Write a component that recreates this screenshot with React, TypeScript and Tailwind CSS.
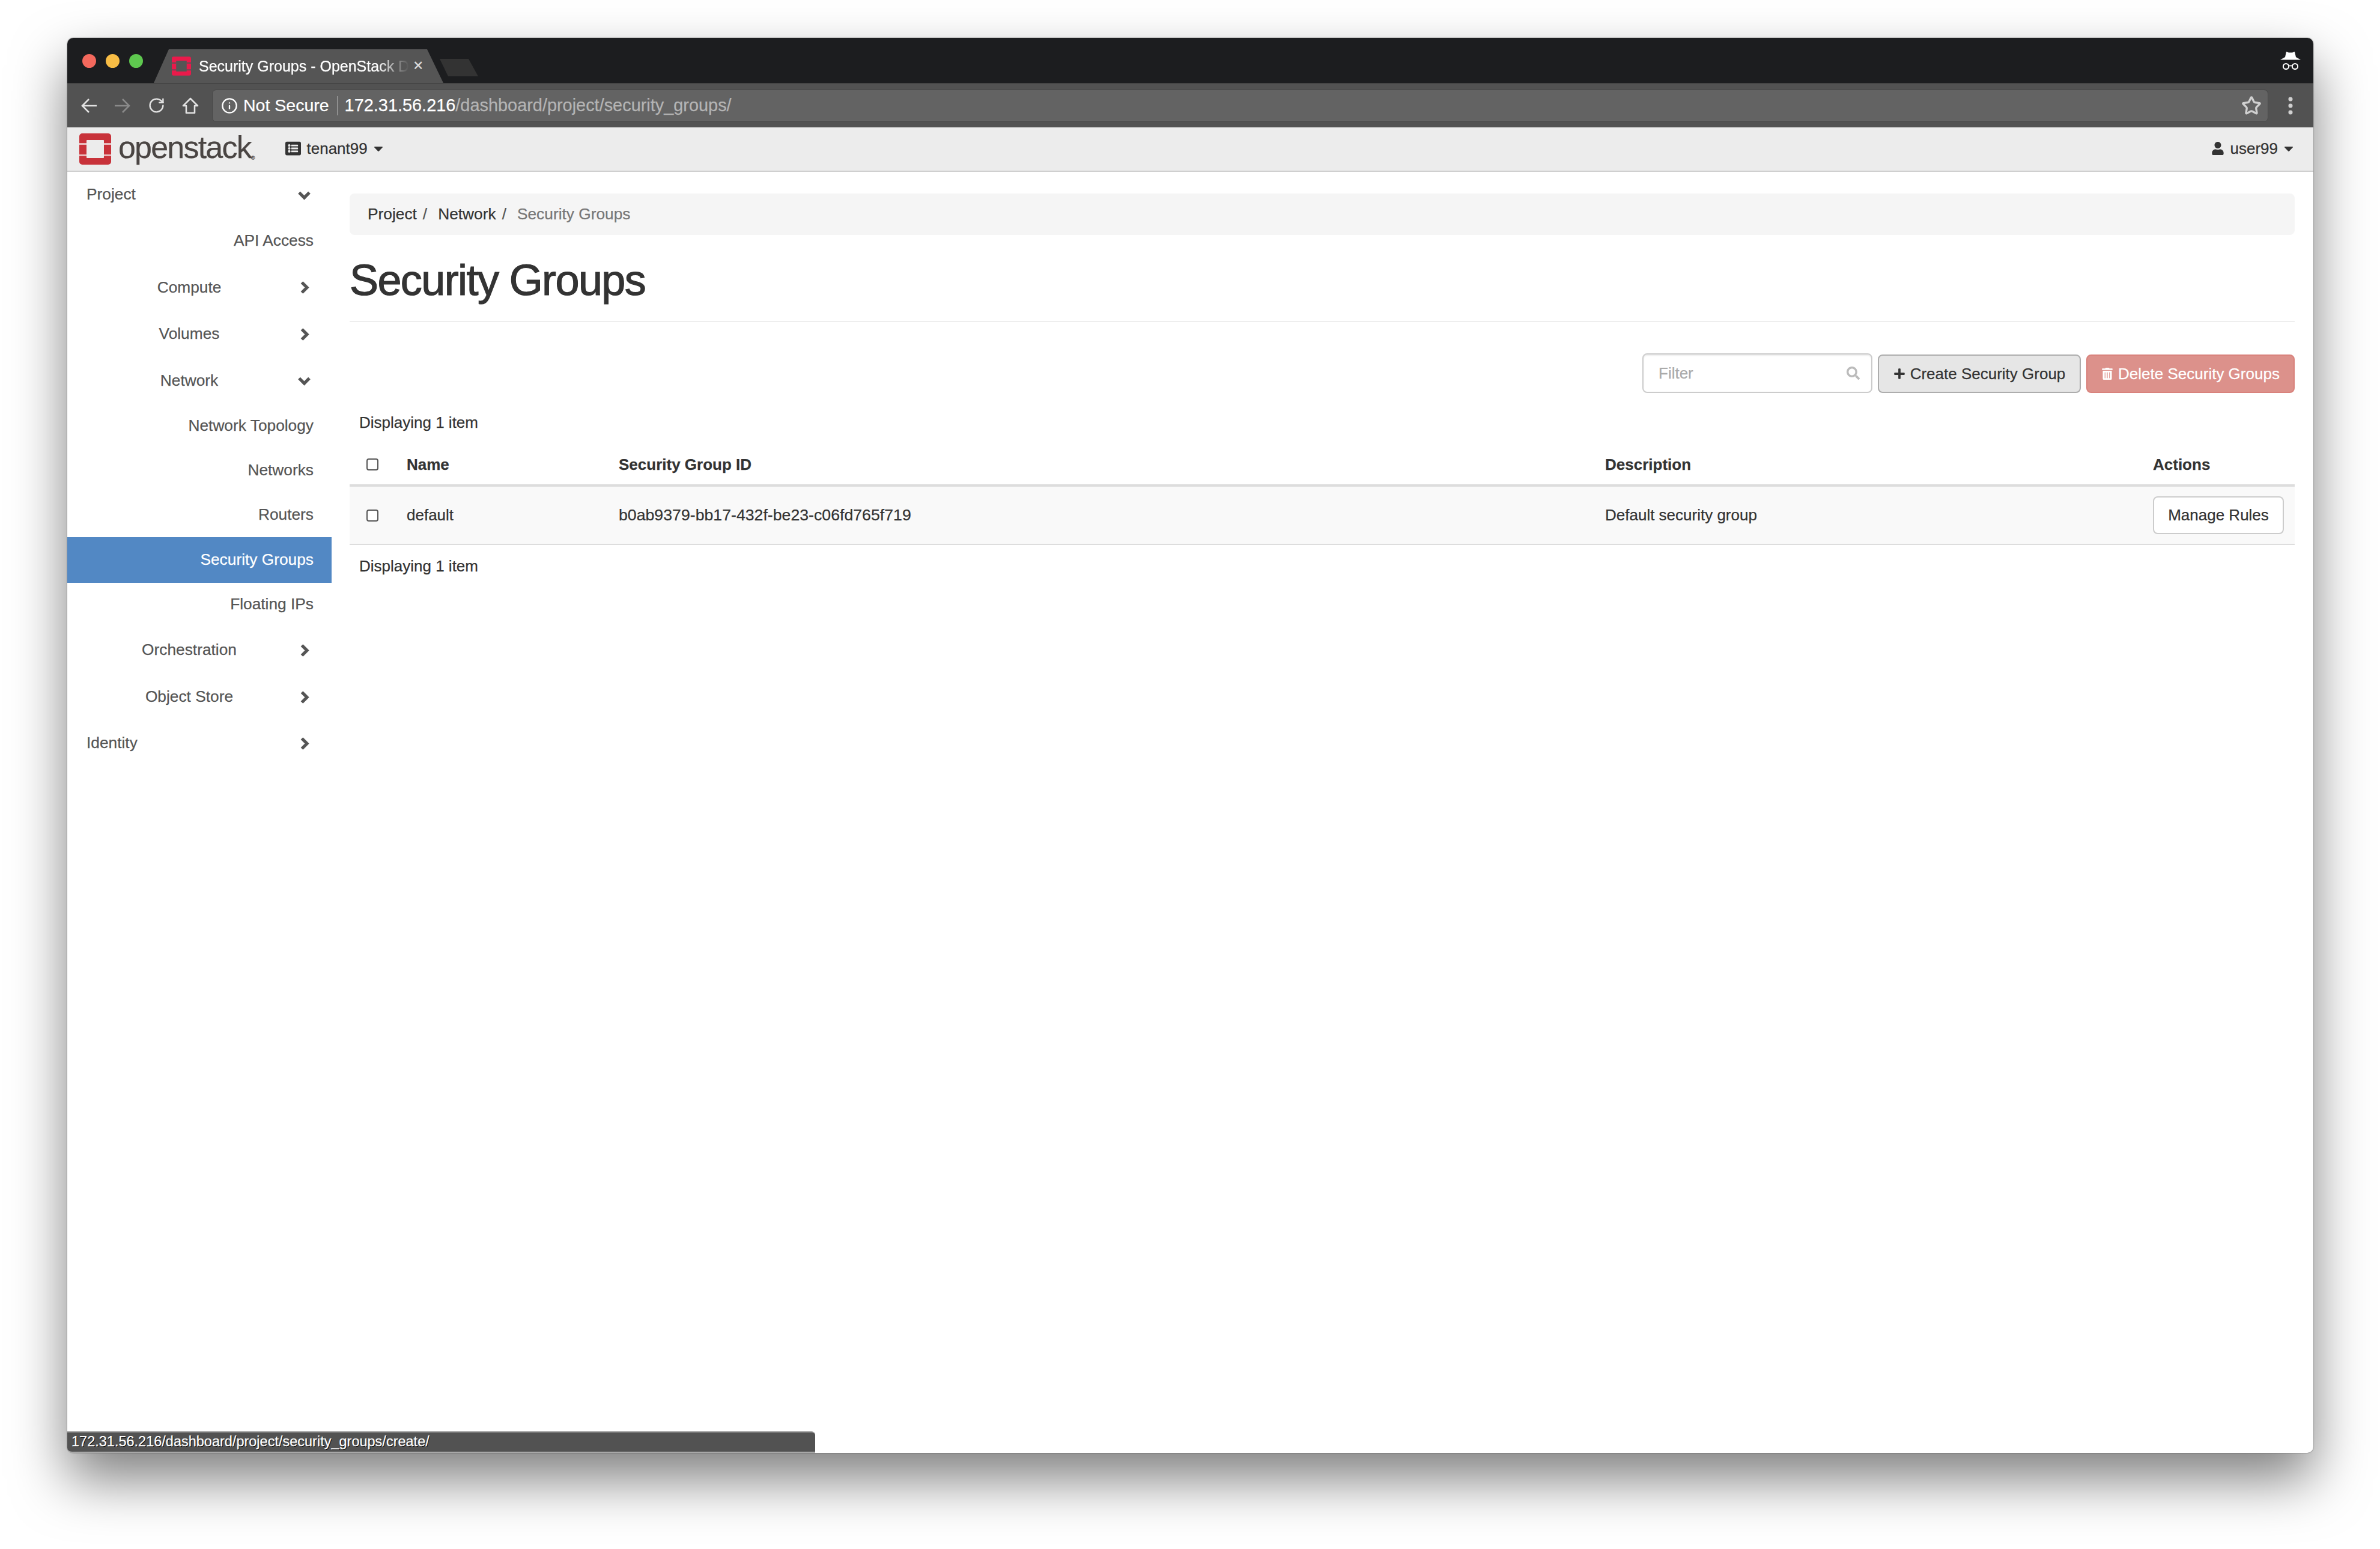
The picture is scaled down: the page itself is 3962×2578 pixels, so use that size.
import { FaCaretDown, FaListAlt, FaPlus, FaSearch, FaTrashAlt, FaUser } from 'react-icons/fa';
import { Info, RotateCw, Star } from 'lucide-react';

type NavItem = {
  label: string;
  height: string;
  kind: 'top' | 'group' | 'link';
  open?: boolean;
  active?: boolean;
};

const navItems: NavItem[] = [
  { label: 'Project', height: 'h-[76px]', kind: 'top', open: true },
  { label: 'API Access', height: 'h-[78px]', kind: 'link' },
  { label: 'Compute', height: 'h-[77px]', kind: 'group' },
  { label: 'Volumes', height: 'h-[78px]', kind: 'group' },
  { label: 'Network', height: 'h-[77px]', kind: 'group', open: true },
  { label: 'Network Topology', height: 'h-[74px]', kind: 'link' },
  { label: 'Networks', height: 'h-[74px]', kind: 'link' },
  { label: 'Routers', height: 'h-[74px]', kind: 'link' },
  { label: 'Security Groups', height: 'h-[76px]', kind: 'link', active: true },
  { label: 'Floating IPs', height: 'h-[72px]', kind: 'link' },
  { label: 'Orchestration', height: 'h-[80px]', kind: 'group' },
  { label: 'Object Store', height: 'h-[76px]', kind: 'group' },
  { label: 'Identity', height: 'h-[78px]', kind: 'top' },
];

function OpenStackMark({ color, inner, slit, className }: { color: string; inner: string; slit: string; className: string }) {
  return (
    <svg viewBox="0 0 53 52" className={className}>
      <rect width="53" height="52" rx="5" fill={color} />
      <rect x="12" y="11" width="29" height="30" rx="1" fill={inner} />
      <rect x="0" y="16" width="12" height="3" fill={slit} />
      <rect x="0" y="35" width="12" height="3" fill={slit} />
      <rect x="41" y="16" width="12" height="3" fill={slit} />
      <rect x="41" y="35" width="12" height="3" fill={slit} />
    </svg>
  );
}

function Incognito() {
  return (
    <svg viewBox="0 0 34 30" className="w-[34px] h-[30px]">
      <path d="M10 0 L14 1.5 H20 L24 0 L26 9 L34 13.5 H0 L8 9 Z" fill="#fff" />
      <circle cx="9.5" cy="24.5" r="4.6" fill="none" stroke="#fff" strokeWidth="2" />
      <circle cx="24.5" cy="24.5" r="4.6" fill="none" stroke="#fff" strokeWidth="2" />
      <path d="M14 23.5 H20" stroke="#fff" strokeWidth="1.6" />
    </svg>
  );
}

function ArrowIcon({ color, flip }: { color: string; flip?: boolean }) {
  return (
    <svg viewBox="0 0 28 26" className={`w-[28px] h-[26px] ${flip ? 'rotate-180' : ''}`}>
      <path d="M14 2 L3 13 L14 24 M3 13 H27" fill="none" stroke={color} strokeWidth="2.6" />
    </svg>
  );
}

function HomeIcon() {
  return (
    <svg viewBox="0 0 28 28" className="w-[28px] h-[28px]">
      <path d="M14 2 L26 14 H21 V26 H7 V14 H2 Z" fill="none" stroke="#e2e2e2" strokeWidth="2.6" strokeLinejoin="round" />
    </svg>
  );
}

function Dots() {
  return (
    <svg viewBox="0 0 8 30" className="w-[8px] h-[30px]">
      <circle cx="4" cy="4" r="3.5" fill="#d0d0d0" />
      <circle cx="4" cy="15" r="3.5" fill="#d0d0d0" />
      <circle cx="4" cy="26" r="3.5" fill="#d0d0d0" />
    </svg>
  );
}

function Chevron({ open }: { open?: boolean }) {
  return (
    <svg viewBox="0 0 23 23" className={`w-[23px] h-[23px] ${open ? 'rotate-90' : ''}`}>
      <path d="M7.5 3 L16 11.5 L7.5 20" fill="none" stroke="#555" strokeWidth="5.2" />
    </svg>
  );
}

function Check() {
  return <span className="block w-[20px] h-[20px] rounded-[4px] border-2 border-[#555] bg-white" />;
}

function SidebarRow({ item }: { item: NavItem }) {
  const align = item.kind === 'top' ? 'pl-[32px] text-left' : item.kind === 'group' ? 'text-center' : 'pr-[30px] text-right w-full';
  return (
    <div className={`${item.height} flex items-center ${item.active ? 'bg-[#5288c4] text-white' : 'text-[#555]'}`}>
      <span className={`${item.kind === 'link' ? '' : 'w-[406px] shrink-0'} ${align}`}>{item.label}</span>
      {item.kind !== 'link' && (
        <span className="-ml-[23px] w-[23px] flex justify-center">
          <Chevron open={item.open} />
        </span>
      )}
    </div>
  );
}

export default function App() {
  return (
    <div className="w-[3962px] h-[2578px] bg-white pl-[112px] pt-[63px] font-['Liberation_Sans',sans-serif] text-[26px] text-[#333] [-webkit-text-stroke:0.25px] overflow-hidden">
      <div className="relative w-[3739px] h-[2355px] flex flex-col rounded-[10px] bg-white shadow-[0_44px_90px_rgba(0,0,0,0.5),0_0_2px_rgba(0,0,0,0.6)]">
        {/* title bar */}
        <div className="h-[75px] shrink-0 flex bg-[#1c1d1f] rounded-t-[10px] pl-[25px] pr-[21px]">
          <div className="flex gap-[16px] mt-[27px]">
            <span className="w-[23px] h-[23px] rounded-full bg-[#f4695d]" />
            <span className="w-[23px] h-[23px] rounded-full bg-[#f8bd45]" />
            <span className="w-[23px] h-[23px] rounded-full bg-[#5ec84f]" />
          </div>
          <div className="ml-[18px] mt-[19px] w-[482px] h-[56px] bg-[#555] flex items-start pl-[30px] pt-[12px] [clip-path:polygon(0_100%,25px_0,455px_0,100%_100%)]">
            <OpenStackMark color="#ea1a4b" inner="#555" slit="#555" className="w-[32px] h-[32px] shrink-0" />
            <span className="ml-[13px] w-[350px] overflow-hidden whitespace-nowrap text-[25px] leading-[32px] text-white [mask-image:linear-gradient(to_right,black_85%,transparent)]">
              Security Groups - OpenStack Dashboard
            </span>
            <span className="ml-[7px] text-[28px] leading-[30px] text-[#ddd]">×</span>
          </div>
          <div className="-ml-[6px] mt-[35px] w-[64px] h-[29px] bg-[#333] [clip-path:polygon(0_0,48px_0,100%_100%,14px_100%)]" />
          <div className="ml-auto mt-[23px]">
            <Incognito />
          </div>
        </div>

        {/* toolbar */}
        <div className="h-[74px] shrink-0 flex items-center bg-[#525252] border-t border-[#3c3c3c] pl-[22px]">
          <div className="flex items-center gap-[28px] w-[219px]">
            <ArrowIcon color="#e2e2e2" />
            <ArrowIcon color="#8a8a8a" flip />
            <RotateCw size={29} color="#e2e2e2" strokeWidth={2} />
            <HomeIcon />
          </div>
          <div className="w-[3423px] h-[54px] flex items-center rounded-[7px] border border-[#474747] bg-[#636363] pl-[14px] pr-[10px] text-[28.9px]">
            <Info size={28} color="#fff" strokeWidth={2} />
            <span className="ml-[9px] text-white text-[28.5px]">Not Secure</span>
            <span className="ml-[13px] w-px h-[32px] bg-[#a5a5a5]" />
            <span className="ml-[12px] text-white">172.31.56.216</span>
            <span className="text-[#b4b4b4]">/dashboard/project/security_groups/</span>
            <Star size={34} color="#d0d0d0" strokeWidth={2.4} className="ml-auto" />
          </div>
          <div className="ml-[33px]">
            <Dots />
          </div>
        </div>

        {/* openstack nav */}
        <div className="h-[74px] shrink-0 flex items-center bg-[#ececec] border-b-2 border-[#cfcfcf] pl-[20px] pr-[29px]">
          <OpenStackMark color="#c8323a" inner="#ececec" slit="#e9b9bb" className="w-[53px] h-[52px]" />
          <span className="ml-[12px] -mt-[6px] text-[52px] leading-[52px] tracking-[-1.8px] text-[#4a4543]">openstack</span>
          <span className="self-end mb-[16px] text-[9px] leading-none text-[#4a4543]">®</span>
          <FaListAlt size={26} className="ml-[50px] -mt-[2px]" />
          <span className="ml-[10px] -mt-[2px]">tenant99</span>
          <FaCaretDown size={24} className="ml-[6px] -mt-[2px] text-[#333]" />
          <FaUser size={22} className="ml-auto -mt-[2px]" />
          <span className="ml-[10px] -mt-[2px]">user99</span>
          <FaCaretDown size={24} className="ml-[6px] -mt-[2px] text-[#333]" />
        </div>

        {/* body */}
        <div className="flex flex-1 min-h-0">
          <aside className="w-[440px] shrink-0 text-[26.3px]">
            {navItems.map((item) => (
              <SidebarRow key={item.label} item={item} />
            ))}
          </aside>

          <main className="flex-1 min-w-0 pt-[36px] pl-[30px] pr-[31px]">
            <div className="h-[69px] flex items-center rounded-[8px] bg-[#f5f5f5] pl-[30px] text-[26.3px]">
              <span>Project</span>
              <span className="ml-[10px] text-[#555]">/</span>
              <span className="ml-[18px]">Network</span>
              <span className="ml-[10px] text-[#555]">/</span>
              <span className="ml-[18px] text-[#777]">Security Groups</span>
            </div>

            <div className="h-[145px] flex items-center pt-[6px] border-b-2 border-[#eee] text-[72px] leading-none tracking-[-1.6px] [-webkit-text-stroke:1.2px]">
              Security Groups
            </div>

            <div className="mt-[52px] h-[66px] flex items-end justify-end gap-[9px]">
              <div className="w-[383px] h-[66px] flex items-center rounded-[8px] border-2 border-[#ccc] bg-white shadow-[inset_0_2px_2px_rgba(0,0,0,0.075)] pl-[25px] pr-[19px] text-[#aaa]">
                <span className="flex-1">Filter</span>
                <FaSearch size={22} className="text-[#bbb]" />
              </div>
              <button type="button" className="w-[338px] h-[64px] flex items-center justify-center rounded-[8px] border-2 border-[#adadad] bg-[#e6e6e6] text-[#333]">
                <FaPlus size={20} className="mr-[8px]" />
                Create Security Group
              </button>
              <button type="button" className="w-[347px] h-[64px] flex items-center justify-center rounded-[8px] border-2 border-[#d9827c] bg-[#dc918b] text-white">
                <FaTrashAlt size={20} className="mr-[8px]" />
                Delete Security Groups
              </button>
            </div>

            <div className="h-[98px] flex items-center pl-[16px]">Displaying 1 item</div>

            <div className="h-[58px] pb-[12px] grid grid-cols-[95px_353px_1642px_912px_1fr] items-center border-b-4 border-[#ddd] font-bold">
              <div className="pl-[28px]">
                <Check />
              </div>
              <div>Name</div>
              <div>Security Group ID</div>
              <div>Description</div>
              <div>Actions</div>
            </div>
            <div className="h-[97px] grid grid-cols-[95px_353px_1642px_912px_1fr] items-center border-b-2 border-[#ddd] bg-[#f9f9f9]">
              <div className="pl-[28px]">
                <Check />
              </div>
              <div>default</div>
              <div className="text-[26.7px]">b0ab9379-bb17-432f-be23-c06fd765f719</div>
              <div>Default security group</div>
              <div>
                <button type="button" className="w-[218px] h-[63px] rounded-[8px] border-2 border-[#ccc] bg-white text-[#333]">
                  Manage Rules
                </button>
              </div>
            </div>

            <div className="h-[70px] flex items-center pl-[16px]">Displaying 1 item</div>
          </main>
        </div>

        {/* link status bubble */}
        <div className="absolute left-0 bottom-0 w-[1245px] h-[36px] flex items-center rounded-tr-[6px] rounded-bl-[8px] border-y-2 border-[#a8a8a8] bg-[#525252] pl-[7px] text-[23.5px] text-white [text-shadow:1px_1px_0_#000]">
          172.31.56.216/dashboard/project/security_groups/create/
        </div>
      </div>
    </div>
  );
}
